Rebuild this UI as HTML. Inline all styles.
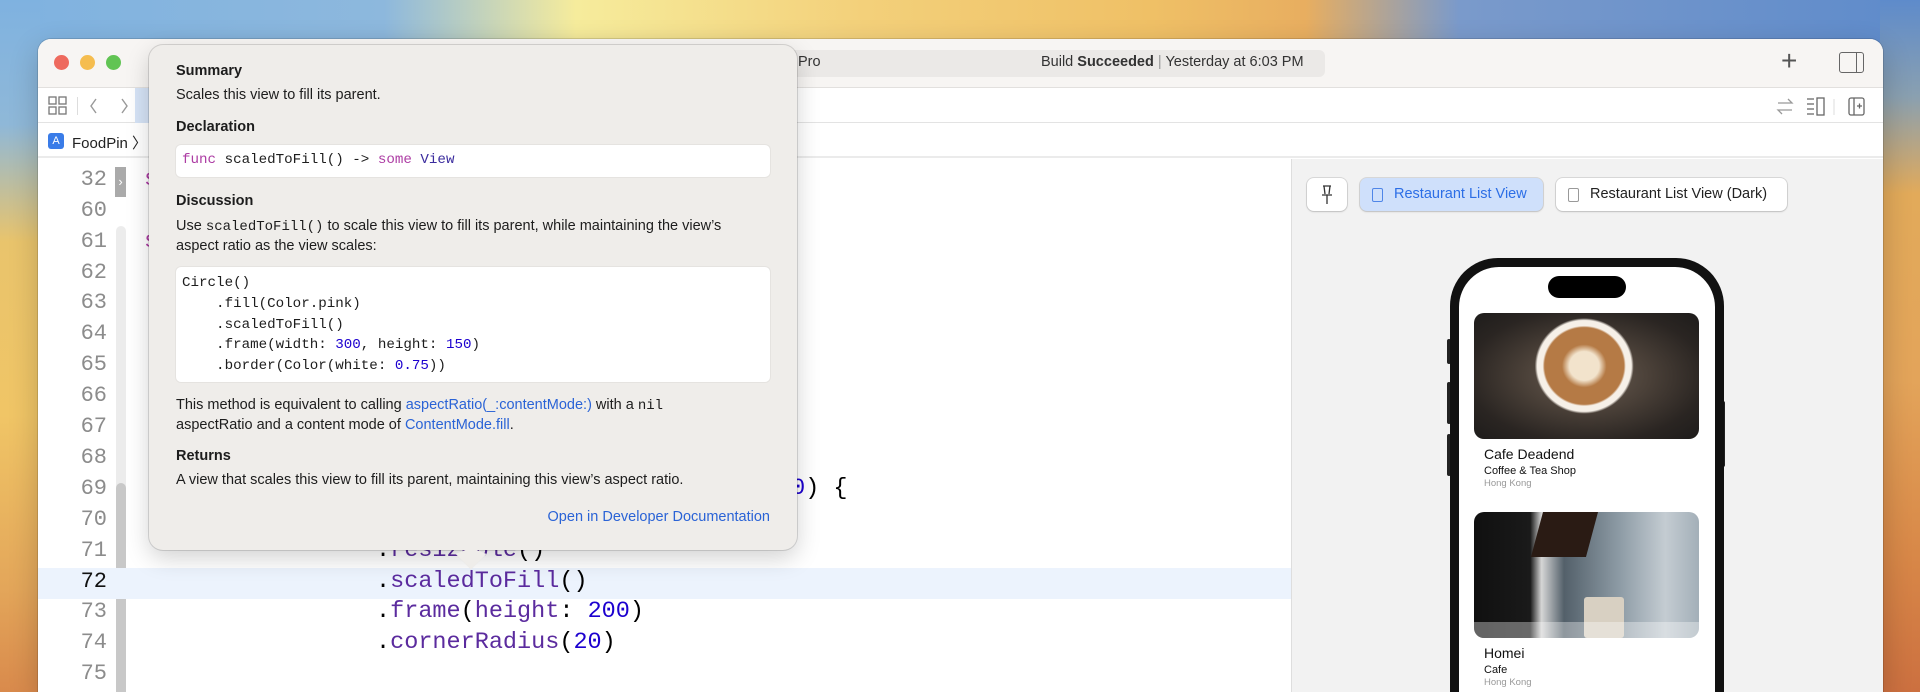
<!DOCTYPE html>
<html><head><meta charset="utf-8"><style>
*{margin:0;padding:0;box-sizing:border-box}
html,body{width:1920px;height:692px;overflow:hidden}
body{position:relative;font-family:"Liberation Sans",sans-serif;background:#7fb2e0}
.bg{position:absolute;left:0;top:0;width:1920px;height:692px;background:linear-gradient(90deg,#7fb2e0 0,#8db8dd 20%,#f6ec9c 30%,#f3d07a 45%,#efc066 60%,#e8ae60 68%,#7a9acb 76%,#5e8bcb 100%)}
.abs{position:absolute}
.win{left:38px;top:39px;width:1845px;height:653px;background:#fff;border-radius:13px 13px 0 0;overflow:hidden;box-shadow:0 0 0 1px rgba(0,0,0,.12),0 10px 30px rgba(0,0,0,.2)}
.mono{font-family:"Liberation Mono",monospace}
.ln{position:absolute;left:0;width:107px;text-align:right;font-family:"Liberation Mono",monospace;font-size:22px;color:#8c8c8c;height:31px;line-height:31px}
.code{position:absolute;font-family:"Liberation Mono",monospace;font-size:23.5px;height:31px;line-height:31px;color:#000;white-space:pre}
.p{color:#5b2b9e}.n{color:#1c00cf}.k{color:#ad3da4}
.pop{left:149px;top:45px;width:648px;height:505px;background:#efedea;border-radius:14px;box-shadow:0 0 0 1px rgba(0,0,0,.13),0 8px 24px rgba(0,0,0,.18);z-index:5;color:#1d1d1d;font-size:14.5px}
.pop .t{position:absolute;left:27px;white-space:nowrap}
.pop b{font-weight:bold}
.box{position:absolute;left:27px;width:594px;background:#fff;border-radius:5px;box-shadow:0 0 0 1px rgba(0,0,0,.04)}
.cm{font-family:"Liberation Mono",monospace;font-size:14.2px;white-space:pre;position:absolute;left:6px}
a{color:#2a63d6;text-decoration:none}
.btn{position:absolute;top:139px;height:33px;background:#fff;border-radius:7px;box-shadow:0 0 0 1px rgba(0,0,0,.1),0 1px 2px rgba(0,0,0,.12);font-size:14.5px;line-height:33px;white-space:nowrap}
</style></head><body>
<div class="bg"></div>
<div class="abs" style="left:0;top:0;width:40px;height:692px;background:linear-gradient(180deg,#7fb2e0 0,#8fb8d8 18%,#e9c46c 35%,#f0c566 60%,#e3a65a 85%,#d98a4c 100%)"></div>
<div class="abs" style="left:1880px;top:0;width:40px;height:692px;background:linear-gradient(180deg,#5e8bcb 0,#8aa0b0 14%,#e2aa5a 28%,#e3a45a 55%,#d88848 80%,#cc7040 100%)"></div>
<div class="abs win">
  <div class="abs" style="left:0;top:0;width:1845px;height:49px;background:#f7f5f3;border-bottom:1px solid #e2e0de"></div>
  <div class="abs" style="left:16px;top:16px;width:15px;height:15px;border-radius:50%;background:#ee6a5e"></div>
  <div class="abs" style="left:42px;top:16px;width:15px;height:15px;border-radius:50%;background:#f5bd4f"></div>
  <div class="abs" style="left:68px;top:16px;width:15px;height:15px;border-radius:50%;background:#61c454"></div>
  <div class="abs" style="left:700px;top:11px;width:587px;height:27px;background:#ebe9e7;border-radius:6px"></div>
  <div class="abs" style="left:760px;top:15px;font-size:14.5px;color:#333">Pro</div>
  <div class="abs" style="left:1003px;top:15px;font-size:14.5px;color:#333;white-space:nowrap">Build <b>Succeeded</b> <span style="color:#999">|</span> Yesterday at 6:03 PM</div>
  <div class="abs" style="left:1743px;top:6px;font-size:28px;color:#555;font-weight:300">+</div>
  <div class="abs" style="left:1801px;top:13px;width:25px;height:21px;border:1.6px solid #666;border-radius:3px"><div style="position:absolute;right:6px;top:0;bottom:0;border-left:1.6px solid #666"></div></div>
  <div class="abs" style="left:0;top:49px;width:1845px;height:35px;background:#fff;border-bottom:1px solid #e3e3e3"></div>
  <svg class="abs" style="left:10px;top:57px" width="20" height="20"><g fill="none" stroke="#777" stroke-width="1.3"><rect x="1" y="1" width="7" height="7"/><rect x="11" y="1" width="7" height="7"/><rect x="1" y="11" width="7" height="7"/><rect x="11" y="11" width="7" height="7"/></g></svg>
  <div class="abs" style="left:39px;top:58px;height:18px;border-left:1px solid #ddd"></div>
  <svg class="abs" style="left:50px;top:57px" width="50" height="20"><path d="M8 3 L3 10 L8 17 M34 3 L39 10 L34 17" fill="none" stroke="#999" stroke-width="1.4"/></svg>
  <div class="abs" style="left:97px;top:49px;width:52px;height:35px;background:#d5e3f6"></div>
  <svg class="abs" style="left:1738px;top:57px" width="100" height="22"><g fill="none" stroke="#999" stroke-width="1.3"><path d="M2 7h14l-4-4M16 14H2l4 4"/></g><g fill="none" stroke="#666" stroke-width="1.3"><path d="M31 3h7M31 8h7M31 13h7M31 18h7"/><rect x="41" y="2" width="7" height="17"/><rect x="73" y="2" width="15" height="17" rx="2"/><path d="M78 2v17M81 10h5M83.5 7.5v5"/></g><path d="M58 3v16" stroke="#ddd"/></svg>
  <div class="abs" style="left:0;top:85px;width:1845px;height:34px;background:#fff;border-bottom:2px solid #ebebeb"></div>
  <div class="abs" style="left:10px;top:94px;width:16px;height:16px;background:#3a7ce8;border-radius:3px;color:#fff;font-size:11px;text-align:center;line-height:16px">A</div>
  <div class="abs" style="left:34px;top:93px;font-size:15px;color:#222">FoodPin 〉</div>
  <div class="abs" style="left:78px;top:187px;width:10px;height:520px;background:#ececec;border-radius:5px"></div>
  <div class="abs" style="left:78px;top:444px;width:10px;height:270px;background:#c8c8c8;border-radius:5px"></div>
  <div class="abs" style="left:77px;top:128px;width:11px;height:30px;background:#aaa;color:#fff;font-size:13px;line-height:30px;text-align:center">›</div>
  <div class="abs" style="left:0;top:529px;width:1253px;height:31px;background:#ecf3fd"></div>
  <div class="abs" style="left:1253px;top:120px;width:1px;height:600px;background:#dedede"></div>
  <div class="abs" style="left:1254px;top:120px;width:591px;height:600px;background:#f2f2f2"></div>
  <div class="btn" style="left:1269px;width:40px;text-align:center"><svg width="16" height="22" style="margin-top:6px"><path d="M4 2h8M5 2l1 8M11 2l-1 8M3 11h10M8 11v9" fill="none" stroke="#333" stroke-width="1.3"/></svg></div>
  <div class="btn" style="left:1322px;width:183px;background:#cfe0fb;color:#2c6ee6;padding-left:34px"><span style="position:absolute;left:12px;top:10px;width:11px;height:14px;border:1.4px solid #4f86e8;border-radius:2px"></span>Restaurant List View</div>
  <div class="btn" style="left:1518px;width:231px;color:#222;padding-left:34px"><span style="position:absolute;left:12px;top:10px;width:11px;height:14px;border:1.4px solid #999;border-radius:2px"></span>Restaurant List View (Dark)</div>
  <div class="abs" style="left:1409px;top:300px;width:4px;height:25px;background:#222;border-radius:2px"></div>
  <div class="abs" style="left:1409px;top:343px;width:4px;height:42px;background:#222;border-radius:2px"></div>
  <div class="abs" style="left:1409px;top:395px;width:4px;height:42px;background:#222;border-radius:2px"></div>
  <div class="abs" style="left:1683px;top:362px;width:4px;height:66px;background:#222;border-radius:2px"></div>
  <div class="abs" style="left:1412px;top:219px;width:274px;height:520px;background:#111;border-radius:48px"></div>
  <div class="abs" style="left:1421px;top:228px;width:256px;height:510px;background:#fff;border-radius:40px;overflow:hidden">
    <div class="abs" style="left:89px;top:9px;width:78px;height:22px;background:#000;border-radius:11px"></div>
    <div class="abs" style="left:15px;top:46px;width:225px;height:126px;border-radius:10px;background:radial-gradient(ellipse 22% 38% at 49% 42%,#f2e3cc 0 30%,#b57a45 45% 80%,#f6f0e8 84% 95%,transparent 100%),radial-gradient(ellipse at 50% 50%,#6a5d52 0,#4a4038 40%,#2a2522 75%,#1e1c1b 100%)"></div>
    <div class="abs" style="left:25px;top:179px;font-size:14px;color:#111">Cafe Deadend</div>
    <div class="abs" style="left:25px;top:198px;font-size:11px;color:#111">Coffee &amp; Tea Shop</div>
    <div class="abs" style="left:25px;top:211px;font-size:9.5px;color:#999">Hong Kong</div>
    <div class="abs" style="left:15px;top:245px;width:225px;height:126px;border-radius:10px;overflow:hidden;background:linear-gradient(90deg,#101010 0,#1a1a1a 25%,#d6d6d6 30%,#53606a 40%,#8e9ca6 65%,#c4ccd2 85%,#a3afb8 100%)"><div class="abs" style="left:110px;top:85px;width:40px;height:41px;background:#d8d0c2;border-radius:3px"></div><div class="abs" style="left:63px;top:0;width:55px;height:45px;background:#2a1b14;transform:skewX(-15deg)"></div><div class="abs" style="left:0;top:110px;width:225px;height:16px;background:rgba(255,255,255,.35)"></div></div>
    <div class="abs" style="left:25px;top:378px;font-size:14px;color:#111">Homei</div>
    <div class="abs" style="left:25px;top:397px;font-size:11px;color:#111">Cafe</div>
    <div class="abs" style="left:25px;top:410px;font-size:9.5px;color:#999">Hong Kong</div>
  </div>
</div>
<div class="ln" style="top:164px">32</div><div class="ln" style="top:195px">60</div><div class="ln" style="top:226px">61</div><div class="ln" style="top:257px">62</div><div class="ln" style="top:287px">63</div><div class="ln" style="top:318px">64</div><div class="ln" style="top:349px">65</div><div class="ln" style="top:380px">66</div><div class="ln" style="top:411px">67</div><div class="ln" style="top:442px">68</div><div class="ln" style="top:473px">69</div><div class="ln" style="top:504px">70</div><div class="ln" style="top:535px">71</div><div class="ln" style="top:566px;color:#111">72</div><div class="ln" style="top:596px">73</div><div class="ln" style="top:627px">74</div><div class="ln" style="top:658px">75</div>
<div class="code k" style="left:144px;top:164px">struct</div>
<div class="code k" style="left:144px;top:226px">struct</div>
<div class="code" style="left:777px;top:473px"><span class="n">10</span>) {</div>
<div class="code" style="left:376px;top:535px">.<span class="p">resizable</span>()</div>
<div class="code" style="left:376px;top:566px">.<span class="p">scaledToFill</span>()</div>
<div class="code" style="left:376px;top:596px">.<span class="p">frame</span>(<span class="p">height</span>: <span class="n">200</span>)</div>
<div class="code" style="left:376px;top:627px">.<span class="p">cornerRadius</span>(<span class="n">20</span>)</div>
<div class="abs pop">
  <div class="t" style="top:18px"><b>Summary</b></div>
  <div class="t" style="top:42px">Scales this view to fill its parent.</div>
  <div class="t" style="top:74px"><b>Declaration</b></div>
  <div class="box" style="top:100px;height:32px"><div class="cm" style="top:7px"><span class="k">func</span> scaledToFill() -&gt; <span class="k">some</span> <span style="color:#3b2c9e">View</span></div></div>
  <div class="t" style="top:148px"><b>Discussion</b></div>
  <div class="t" style="top:173px">Use <span class="mono" style="font-size:14px">scaledToFill()</span> to scale this view to fill its parent, while maintaining the view’s</div>
  <div class="t" style="top:193px">aspect ratio as the view scales:</div>
  <div class="box" style="top:222px;height:115px">
    <div class="cm" style="top:6px;line-height:20.8px">Circle()
    .fill(Color.pink)
    .scaledToFill()
    .frame(width: <span class="n">300</span>, height: <span class="n">150</span>)
    .border(Color(white: <span class="n">0.75</span>))</div>
  </div>
  <div class="t" style="top:352px">This method is equivalent to calling <a>aspectRatio(_:contentMode:)</a> with a <span class="mono" style="font-size:14px">nil</span></div>
  <div class="t" style="top:372px">aspectRatio and a content mode of <a>ContentMode.fill</a>.</div>
  <div class="t" style="top:403px"><b>Returns</b></div>
  <div class="t" style="top:427px">A view that scales this view to fill its parent, maintaining this view’s aspect ratio.</div>
  <div class="t" style="top:464px;left:auto;right:27px"><a>Open in Developer Documentation</a></div>
  <div class="abs" style="left:311px;top:498px;width:22px;height:22px;background:#efedea;transform:rotate(45deg);box-shadow:2px 2px 2px rgba(0,0,0,.1);clip-path:polygon(30% 30%,100% 0,100% 100%,0 100%)"></div>
</div>
</body></html>
